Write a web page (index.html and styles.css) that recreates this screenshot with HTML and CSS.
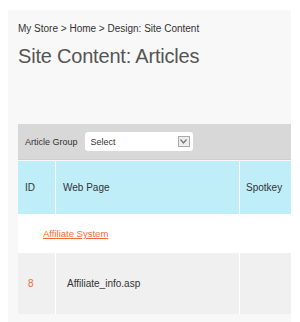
FILE: index.html
```html
<!DOCTYPE html>
<html lang="en">
<head>
    <meta charset="UTF-8">
    <title>Site Content: Articles</title>
    <link rel="stylesheet" href="styles.css">
</head>
<body>
    <div class="page">
        <div class="crumbs">My Store &gt; Home &gt; Design: Site Content</div>
        <h1 class="page__title">Site Content: Articles</h1>

        <div class="grid">
            <div class="grid__filter">
                <span class="grid__filter-label">Article Group</span>
                <div class="select">
                    <span class="select__value">Select</span>
                    <span class="select__arrow">
                        <svg width="7" height="5" viewBox="0 0 7 5"><path d="M0.5 0.5 L3.5 4 L6.5 0.5" fill="none" stroke="#777" stroke-width="1.3"/></svg>
                    </span>
                </div>
            </div>
            <div class="grid__row grid__row--head">
                <div class="grid__cell grid__cell--id">ID</div>
                <div class="grid__cell grid__cell--page">Web Page</div>
                <div class="grid__cell grid__cell--key">Spotkey</div>
            </div>
            <div class="grid__group">
                <a class="grid__group-link" href="#">Affiliate System</a>
            </div>
            <div class="grid__row grid__row--item">
                <div class="grid__cell grid__cell--id grid__cell--num">8</div>
                <div class="grid__cell grid__cell--page grid__cell--file">Affiliate_info.asp</div>
                <div class="grid__cell grid__cell--key"></div>
            </div>
        </div>
    </div>
</body>
</html>
```

FILE: styles.css
```css
html {
    background-color: #fff;
}

body {
    margin: 0;
    font-family: "Liberation Sans", Arial, sans-serif;
    color: #333;
}

.page {
    background-color: #f8f8f8;
    margin: 10px 9px 0 8px;
    padding: 12px 0 0 10px;
    height: 312px;
    box-sizing: border-box;
}

.crumbs {
    font-size: 10px;
    line-height: 13px;
    color: #333;
}

.page__title {
    font-size: 20px;
    font-weight: normal;
    color: #555;
    margin: 9px 0 0;
    line-height: 24px;
    letter-spacing: -0.2px;
}

.grid {
    margin-top: 56px;
    font-size: 10px;
}

.grid__filter {
    background-color: #d8d8d8;
    height: 36px;
    display: flex;
    align-items: center;
    padding-left: 7px;
    border-bottom: 1px solid #cfcfcf;
    box-sizing: border-box;
    font-size: 9px;
}

.grid__filter-label {
    color: #333;
    margin-right: 7px;
}

.select {
    background-color: #fff;
    border-radius: 3px;
    width: 108px;
    height: 19px;
    display: flex;
    align-items: center;
    justify-content: space-between;
    padding: 0 3px 0 6px;
    box-sizing: border-box;
}

.select__arrow {
    width: 12px;
    height: 11px;
    border: 1px solid #aaa;
    background-color: #eee;
    display: flex;
    align-items: center;
    justify-content: center;
    box-sizing: border-box;
}

.grid__row {
    display: flex;
}

.grid__row--head {
    background-color: #bfeef9;
    height: 53px;
    margin-top: 1px;
}

.grid__row--item {
    background-color: #f0f0f0;
    height: 61px;
}

.grid__cell {
    display: flex;
    align-items: center;
    box-sizing: border-box;
    border-right: 1px solid #fff;
}

.grid__cell--id {
    width: 38px;
    padding-left: 7px;
}

.grid__cell--page {
    width: 184px;
    padding-left: 7px;
}

.grid__cell--key {
    flex: 1;
    padding-left: 6px;
    border-right: 0;
}

.grid__cell--num {
    color: #f26b3a;
    padding-left: 10px;
}

.grid__cell--file {
    padding-left: 11px;
}

.grid__group {
    background-color: #fff;
    height: 39px;
    display: flex;
    align-items: center;
    padding-left: 25px;
    font-size: 9.5px;
}

.grid__group-link {
    color: #f26b3a;
    text-decoration: underline;
}
```
